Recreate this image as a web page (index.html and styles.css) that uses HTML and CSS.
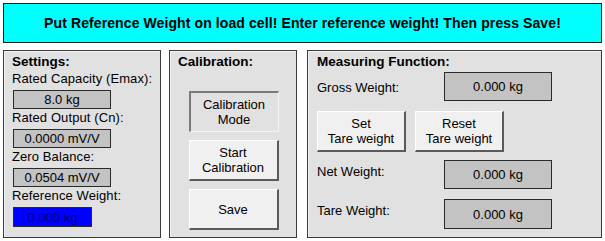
FILE: index.html
```html
<!DOCTYPE html>
<html>
<head>
<meta charset="utf-8">
<link rel="stylesheet" href="styles.css">
</head>
<body>
<div class="banner">Put Reference Weight on load cell! Enter reference weight! Then press Save!</div>
<div class="panels">
  <section class="panel settings">
    <h2 class="title">Settings:</h2>
    <div class="field">
      <div class="label">Rated Capacity (Emax):</div>
      <div class="value">8.0 kg</div>
    </div>
    <div class="field">
      <div class="label">Rated Output (Cn):</div>
      <div class="value">0.0000 mV/V</div>
    </div>
    <div class="field">
      <div class="label">Zero Balance:</div>
      <div class="value">0.0504 mV/V</div>
    </div>
    <div class="field">
      <div class="label">Reference Weight:</div>
      <div class="value input">0.000 kg</div>
    </div>
  </section>
  <section class="panel calib">
    <h2 class="title">Calibration:</h2>
    <div class="btn-col">
      <div class="btn pressed">Calibration<br>Mode</div>
      <div class="btn">Start<br>Calibration</div>
      <div class="btn">Save</div>
    </div>
  </section>
  <section class="panel measure">
    <h2 class="title">Measuring Function:</h2>
    <div class="row gross">
      <div class="mlabel">Gross Weight:</div>
      <div class="mvalue">0.000 kg</div>
    </div>
    <div class="btn-row">
      <div class="btn">Set<br>Tare weight</div>
      <div class="btn">Reset<br>Tare weight</div>
    </div>
    <div class="row net">
      <div class="mlabel">Net Weight:</div>
      <div class="mvalue">0.000 kg</div>
    </div>
    <div class="row tare">
      <div class="mlabel">Tare Weight:</div>
      <div class="mvalue tall">0.000 kg</div>
    </div>
  </section>
</div>
</body>
</html>
```

FILE: styles.css
```css
html, body {
  margin: 0;
  background: #ffffff;
}
body {
  padding: 3px 3px 0 3px;
  font-family: "Liberation Sans", Arial, sans-serif;
  font-size: 13px;
  color: #000;
}
.banner {
  box-sizing: border-box;
  width: 599px;
  height: 40px;
  background: #00ffff;
  border: 1px solid #1e1e1e;
  display: flex;
  align-items: center;
  justify-content: center;
  font-weight: bold;
  font-size: 14px;
  letter-spacing: 0.1px;
}
.panels {
  display: flex;
  margin-top: 7px;
  height: 188px;
}
.panel {
  box-sizing: border-box;
  height: 188px;
  background: #e1e1e1;
  border: 1px solid #3a3a3a;
  box-shadow: inset 1px 1px 0 #f4f4f4;
  padding: 3px 8px 0 8px;
}
.title {
  margin: 0;
  font-size: 13.5px;
  font-weight: bold;
  line-height: 16px;
}
.settings { width: 158px; }
.calib { width: 128px; margin-left: 8px; }
.measure { width: 295px; margin-left: 10px; padding-left: 9px; }

.field { margin-top: 1px; }
.settings .title { margin-bottom: 1px; }
.label {
  line-height: 16px;
  white-space: nowrap;
  letter-spacing: 0.1px;
}
.value {
  box-sizing: border-box;
  margin: 3px 0 0 1px;
  width: 98px;
  height: 19px;
  background: #c3c3c3;
  border: 1px solid #2a2a2a;
  display: flex;
  align-items: center;
  justify-content: center;
}
.value.input {
  width: 79px;
  height: 20px;
  background: #0000ff;
  color: #000070;
}

.btn-col {
  display: flex;
  flex-direction: column;
  align-items: center;
  gap: 8px;
  margin-top: 21px;
  padding-left: 1px;
}
.btn {
  box-sizing: border-box;
  width: 90px;
  height: 41px;
  background: #f0f0f0;
  border-style: solid;
  border-width: 1px 2px 2px 1px;
  border-color: #ffffff #5a5a5a #5a5a5a #ffffff;
  display: flex;
  align-items: center;
  justify-content: center;
  text-align: center;
  line-height: 15px;
}
.btn.pressed {
  background: #e1e1e1;
  border-width: 2px 1px 1px 2px;
  border-color: #7a7a7a #f4f4f4 #f4f4f4 #7a7a7a;
}

.row {
  display: flex;
  align-items: flex-start;
}
.mlabel {
  width: 127px;
  line-height: 16px;
  white-space: nowrap;
}
.mvalue {
  box-sizing: border-box;
  width: 108px;
  height: 29px;
  background: #c3c3c3;
  border: 1px solid #2a2a2a;
  display: flex;
  align-items: center;
  justify-content: center;
}
.mvalue.tall { height: 30px; }
.gross { margin-top: 2px; }
.gross .mlabel { padding-top: 8px; }
.net { margin-top: 8px; }
.net .mlabel { padding-top: 4px; }
.tare { margin-top: 10px; }
.tare .mlabel { padding-top: 4px; }
.btn-row {
  display: flex;
  gap: 9px;
  margin-top: 10px;
}
.btn-row .btn { width: 89px; }
```
